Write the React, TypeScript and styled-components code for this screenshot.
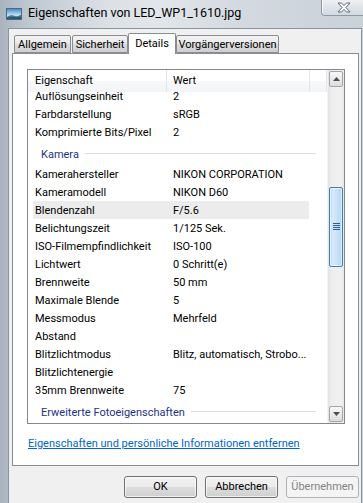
import React from "react";
import styled, { createGlobalStyle } from "styled-components";

const Global = createGlobalStyle`
  html, body { margin: 0; padding: 0; background: #c9d2db; }
  body { font-family: Roboto, "Segoe UI", "Noto Sans", sans-serif; font-size: 11px; color: #000; }
  * { box-sizing: border-box; }
`;

const Window = styled.div`
  width: 363px;
  height: 503px;
  overflow: hidden;
  display: flex;
  flex-direction: column;
  background: linear-gradient(90deg, #a9b4bf 0px, #bfc9d2 30px, #dce1e6 110px, #e2e6ea 160px, #d3d9df 240px, #c9d1d9 363px);
`;

const TitleBar = styled.div`
  height: 28px;
  flex: none;
  display: flex;
  align-items: flex-start;
`;

const TitleIcon = styled.svg`
  margin: 8px 0 0 6px;
  flex: none;
`;

const TitleText = styled.div`
  margin: 5px 0 0 6px;
  font-size: 12.5px;
  line-height: 16px;
  color: #000;
  white-space: nowrap;
`;

const CloseButton = styled.div`
  margin-left: auto;
  width: 42px;
  height: 16px;
  flex: none;
  border: 1px solid #8e99a5;
  border-top: none;
  border-right: none;
  border-radius: 0 0 0 4px;
  background: linear-gradient(180deg, #eef1f4 0%, #dfe4e9 50%, #d2d9e0 100%);
  box-shadow: inset 1px 0 0 rgba(255,255,255,0.7);
  display: flex;
  align-items: center;
  justify-content: center;
  padding-left: 3px;
`;

const Client = styled.div`
  flex: 1;
  margin-left: 8px;
  width: 354px;
  background: #f0f0f0;
  border: 1px solid #8795a3;
  border-bottom: none;
  padding: 4px 0 0 3px;
  display: flex;
  flex-direction: column;
`;

const TabRow = styled.div`
  height: 20px;
  display: flex;
  align-items: flex-end;
  position: relative;
  z-index: 1;
`;

const Tab = styled.div<{ $w: number; $ml?: number; $active?: boolean }>`
  width: ${(p) => p.$w}px;
  margin-left: ${(p) => p.$ml ?? 0}px;
  height: ${(p) => (p.$active ? 21 : 18)}px;
  margin-bottom: ${(p) => (p.$active ? -1 : 0)}px;
  border: 1px solid #898c95;
  border-bottom: ${(p) => (p.$active ? "none" : "1px solid #898c95")};
  border-radius: 2px 2px 0 0;
  background: ${(p) =>
    p.$active
      ? "#ffffff"
      : "linear-gradient(180deg, #f2f2f2 0%, #ebebeb 45%, #dddddd 50%, #cfcfcf 100%)"};
  font-size: 11px;
  line-height: 15px;
  padding-top: ${(p) => (p.$active ? 2 : 1)}px;
  text-align: center;
  white-space: nowrap;
  color: #000;
`;

const Panel = styled.div`
  width: 347px;
  height: 413px;
  flex: none;
  background: #ffffff;
  border: 1px solid #898c95;
  padding: 15px 0 0 14px;
  display: flex;
  flex-direction: column;
`;

const ListBox = styled.div`
  width: 318px;
  height: 355px;
  flex: none;
  border: 1px solid #828790;
  background: #fff;
  display: flex;
`;

const ListContent = styled.div`
  flex: 1;
  display: flex;
  flex-direction: column;
  overflow: hidden;
`;

const Header = styled.div`
  height: 22px;
  flex: none;
  display: flex;
  background: linear-gradient(180deg, #ffffff 0%, #ffffff 50%, #f7f8f9 51%, #f3f4f6 100%);
  position: relative;
  z-index: 1;
`;

const HeaderCell = styled.div<{ $w?: number; $pl: number }>`
  ${(p) => (p.$w ? `width: ${p.$w}px; flex: none;` : "flex: 1;")}
  padding-left: ${(p) => p.$pl}px;
  border-right: 1px solid #e3e6ea;
  font-size: 11px;
  line-height: 21px;
  color: #000;
`;

const Rows = styled.div`
  flex: 1;
  overflow: hidden;
`;

const RowsInner = styled.div`
  margin-top: -5px;
`;

const Row = styled.div<{ $hot?: boolean }>`
  width: 276px;
  height: 18px;
  margin-left: 5px;
  padding-top: 2px;
  display: flex;
  align-items: flex-start;
  background: ${(p) => (p.$hot ? "#ececec" : "transparent")};
  font-size: 11px;
  line-height: 16px;
  white-space: nowrap;
`;

const PropCell = styled.div`
  width: 134px;
  flex: none;
  padding-left: 2px;
  overflow: hidden;
`;

const ValueCell = styled.div`
  flex: 1;
  padding-left: 6px;
  overflow: hidden;
`;

const Group = styled.div`
  height: 24px;
  display: flex;
  align-items: center;
  padding: 3px 11px 0 13px;
  color: #1e3287;
  font-size: 11px;
  line-height: 16px;
  white-space: nowrap;
`;

const GroupLine = styled.div`
  flex: 1;
  height: 1px;
  margin: -2px 0 0 6px;
  background: #d9dde6;
`;

const ScrollBar = styled.div`
  width: 17px;
  flex: none;
  display: flex;
  flex-direction: column;
  background: linear-gradient(90deg, #e3e3e3 0%, #eeeeee 20%, #f0f0f0 80%, #e8e8e8 100%);
  border-left: 1px solid #f4f4f4;
`;

const ArrowButton = styled.div<{ $down?: boolean }>`
  height: 16px;
  margin: ${(p) => (p.$down ? "0 1px 1px 1px" : "1px 1px 0 1px")};
  border: 1px solid #a5a5a5;
  border-radius: 2px;
  background: linear-gradient(180deg, #f8f8f8 0%, #eaeaea 50%, #dcdcdc 100%);
  display: flex;
  align-items: center;
  justify-content: center;
`;

const Track = styled.div`
  flex: 1;
`;

const Thumb = styled.div<{ $top: number; $h: number }>`
  margin: ${(p) => p.$top}px 1px 0 1px;
  height: ${(p) => p.$h}px;
  border: 1px solid #3c7fb1;
  border-radius: 2px;
  background: linear-gradient(90deg, #bfdcf5 0%, #d6eafb 30%, #c6e1f7 60%, #b3d6f3 100%);
  box-shadow: inset 0 0 0 1px rgba(255,255,255,0.6);
  display: flex;
  align-items: center;
  justify-content: center;
`;

const Link = styled.a`
  margin: 12px 0 0 1px;
  color: #0066cc;
  text-decoration: underline;
  font-size: 11px;
  line-height: 16px;
  cursor: pointer;
`;

const ButtonRow = styled.div`
  display: flex;
  justify-content: flex-end;
  gap: 8px;
  width: 347px;
  margin-top: 10px;
`;

const Button = styled.div<{ $disabled?: boolean }>`
  width: 73px;
  height: 22px;
  border: 1px solid ${(p) => (p.$disabled ? "#adb2b5" : "#707070")};
  border-radius: 3px;
  background: ${(p) =>
    p.$disabled
      ? "#f4f4f4"
      : "linear-gradient(180deg, #f2f2f2 0%, #ebebeb 48%, #dddddd 52%, #cfcfcf 100%)"};
  box-shadow: ${(p) => (p.$disabled ? "none" : "inset 0 0 0 1px rgba(255,255,255,0.7)")};
  color: ${(p) => (p.$disabled ? "#838383" : "#000")};
  font-size: 11px;
  line-height: 20px;
  text-align: center;
`;

type Item =
  | { kind: "row"; name: string; value?: string; hot?: boolean }
  | { kind: "group"; name: string };

const items: Item[] = [
  { kind: "row", name: "Auflösungseinheit", value: "2" },
  { kind: "row", name: "Farbdarstellung", value: "sRGB" },
  { kind: "row", name: "Komprimierte Bits/Pixel", value: "2" },
  { kind: "group", name: "Kamera" },
  { kind: "row", name: "Kamerahersteller", value: "NIKON CORPORATION" },
  { kind: "row", name: "Kameramodell", value: "NIKON D60" },
  { kind: "row", name: "Blendenzahl", value: "F/5.6", hot: true },
  { kind: "row", name: "Belichtungszeit", value: "1/125 Sek." },
  { kind: "row", name: "ISO-Filmempfindlichkeit", value: "ISO-100" },
  { kind: "row", name: "Lichtwert", value: "0 Schritt(e)" },
  { kind: "row", name: "Brennweite", value: "50 mm" },
  { kind: "row", name: "Maximale Blende", value: "5" },
  { kind: "row", name: "Messmodus", value: "Mehrfeld" },
  { kind: "row", name: "Abstand" },
  { kind: "row", name: "Blitzlichtmodus", value: "Blitz, automatisch, Strobo..." },
  { kind: "row", name: "Blitzlichtenergie" },
  { kind: "row", name: "35mm Brennweite", value: "75" },
  { kind: "group", name: "Erweiterte Fotoeigenschaften" },
];

const tabs = [
  { label: "Allgemein", w: 57, ml: 2 },
  { label: "Sicherheit", w: 56, ml: 1 },
  { label: "Details", w: 48, ml: 0, active: true },
  { label: "Vorgängerversionen", w: 103, ml: 0 },
];

const PictureIcon = () => (
  <TitleIcon width="16" height="12" viewBox="0 0 16 12">
    <defs>
      <linearGradient id="sky" x1="0" y1="0" x2="0" y2="1">
        <stop offset="0" stopColor="#3f86c6" />
        <stop offset="0.6" stopColor="#bfe0f4" />
        <stop offset="1" stopColor="#eaf6fb" />
      </linearGradient>
    </defs>
    <rect x="0.5" y="0.5" width="15" height="11" fill="url(#sky)" stroke="#51687e" />
    <path d="M1 9 C4 6.5 7 7 9 8 C11 9 13 7.5 15 7 L15 11 L1 11 Z" fill="#3a7a8a" />
    <path d="M1 10 C5 8.5 9 10 15 9 L15 11 L1 11 Z" fill="#27566a" />
  </TitleIcon>
);

const CloseGlyph = () => (
  <svg width="14" height="11" viewBox="0 0 14 11">
    <path
      d="M1 1 L4.5 1 L7 3.6 L9.5 1 L13 1 L8.9 5.5 L13 10 L9.5 10 L7 7.4 L4.5 10 L1 10 L5.1 5.5 Z"
      fill="#ffffff"
      stroke="#5f6a76"
      strokeWidth="1"
      strokeLinejoin="round"
    />
  </svg>
);

const UpGlyph = () => (
  <svg width="7" height="4" viewBox="0 0 7 4">
    <path d="M0 4 L3.5 0 L7 4 Z" fill="#4d4d4d" />
  </svg>
);

const DownGlyph = () => (
  <svg width="7" height="4" viewBox="0 0 7 4">
    <path d="M0 0 L3.5 4 L7 0 Z" fill="#4d4d4d" />
  </svg>
);

const Gripper = () => (
  <svg width="7" height="8" viewBox="0 0 7 8">
    {[0, 2, 4, 6].map((y) => (
      <rect key={y} x="0" y={y} width="7" height="1" fill="#2b5f8a" />
    ))}
  </svg>
);

export default function App() {
  return (
    <>
      <Global />
      <Window>
        <TitleBar>
          <PictureIcon />
          <TitleText>Eigenschaften von LED_WP1_1610.jpg</TitleText>
          <CloseButton>
            <CloseGlyph />
          </CloseButton>
        </TitleBar>
        <Client>
          <TabRow>
            {tabs.map((t) => (
              <Tab key={t.label} $w={t.w} $ml={t.ml} $active={t.active}>
                {t.label}
              </Tab>
            ))}
          </TabRow>
          <Panel>
            <ListBox>
              <ListContent>
                <Header>
                  <HeaderCell $w={139} $pl={7}>Eigenschaft</HeaderCell>
                  <HeaderCell $w={143} $pl={6}>Wert</HeaderCell>
                  <HeaderCell $pl={0} />
                </Header>
                <Rows>
                  <RowsInner>
                    {items.map((it, i) =>
                      it.kind === "group" ? (
                        <Group key={i}>
                          {it.name}
                          <GroupLine />
                        </Group>
                      ) : (
                        <Row key={i} $hot={it.hot}>
                          <PropCell>{it.name}</PropCell>
                          <ValueCell>{it.value ?? ""}</ValueCell>
                        </Row>
                      )
                    )}
                  </RowsInner>
                </Rows>
              </ListContent>
              <ScrollBar>
                <ArrowButton>
                  <UpGlyph />
                </ArrowButton>
                <Track>
                  <Thumb $top={100} $h={80}>
                    <Gripper />
                  </Thumb>
                </Track>
                <ArrowButton $down>
                  <DownGlyph />
                </ArrowButton>
              </ScrollBar>
            </ListBox>
            <Link>Eigenschaften und persönliche Informationen entfernen</Link>
          </Panel>
          <ButtonRow>
            <Button>OK</Button>
            <Button>Abbrechen</Button>
            <Button $disabled>Übernehmen</Button>
          </ButtonRow>
        </Client>
      </Window>
    </>
  );
}
